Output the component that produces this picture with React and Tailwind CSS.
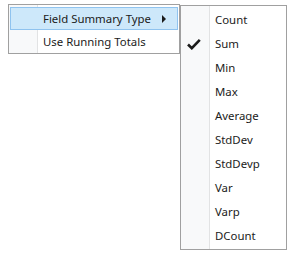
export default function App() {
  const items = ["Count", "Sum", "Min", "Max", "Average", "StdDev", "StdDevp", "Var", "Varp", "DCount"];
  const gutter = "bg-[linear-gradient(to_right,#f8f9fa_0,#f8f9fa_28px,#e2e3e4_28px,#e2e3e4_29px,#ffffff_29px)]";
  return (
    <div className="w-[290px] h-[262px] bg-white text-[#1b1b1b] text-[11.4px] leading-none" style={{ fontFamily: '"Segoe UI", "Noto Sans", sans-serif' }}>
      <div className="flex items-start pt-[4px] pl-[8px]">
        <div className={`w-[172px] border border-[#a0a0a0] pt-[2px] pb-[1px] ${gutter}`}>
          <div className="mx-[1px] h-[23px] flex items-center bg-[#cde8fa] border border-[#8fc3ef] pl-[32px] pr-[11px]">
            <span className="flex-1 pt-[1px]">Field Summary Type</span>
            <svg width="4" height="8" viewBox="0 0 4 8"><path d="M0 0L4 4L0 8Z" fill="#1b1b1b" /></svg>
          </div>
          <div className="mx-[1px] h-[22px] flex items-center pl-[33px] pt-[1px]">Use Running Totals</div>
        </div>
        <div className={`mt-[1px] w-[107px] border border-[#a0a0a0] pt-[2px] pb-[1px] ${gutter}`}>
          {items.map((t) => (
            <div key={t} className="relative h-[24px] flex items-center pl-[34px]">
              {t === "Sum" && (
                <svg width="14" height="12" viewBox="0 0 14 12" className="absolute left-[6px] top-[6px]">
                  <path d="M1 6.5L4.8 10.2L12.8 1.8" fill="none" stroke="#1b1b1b" strokeWidth="2.6" />
                </svg>
              )}
              {t}
            </div>
          ))}
        </div>
      </div>
    </div>
  );
}
